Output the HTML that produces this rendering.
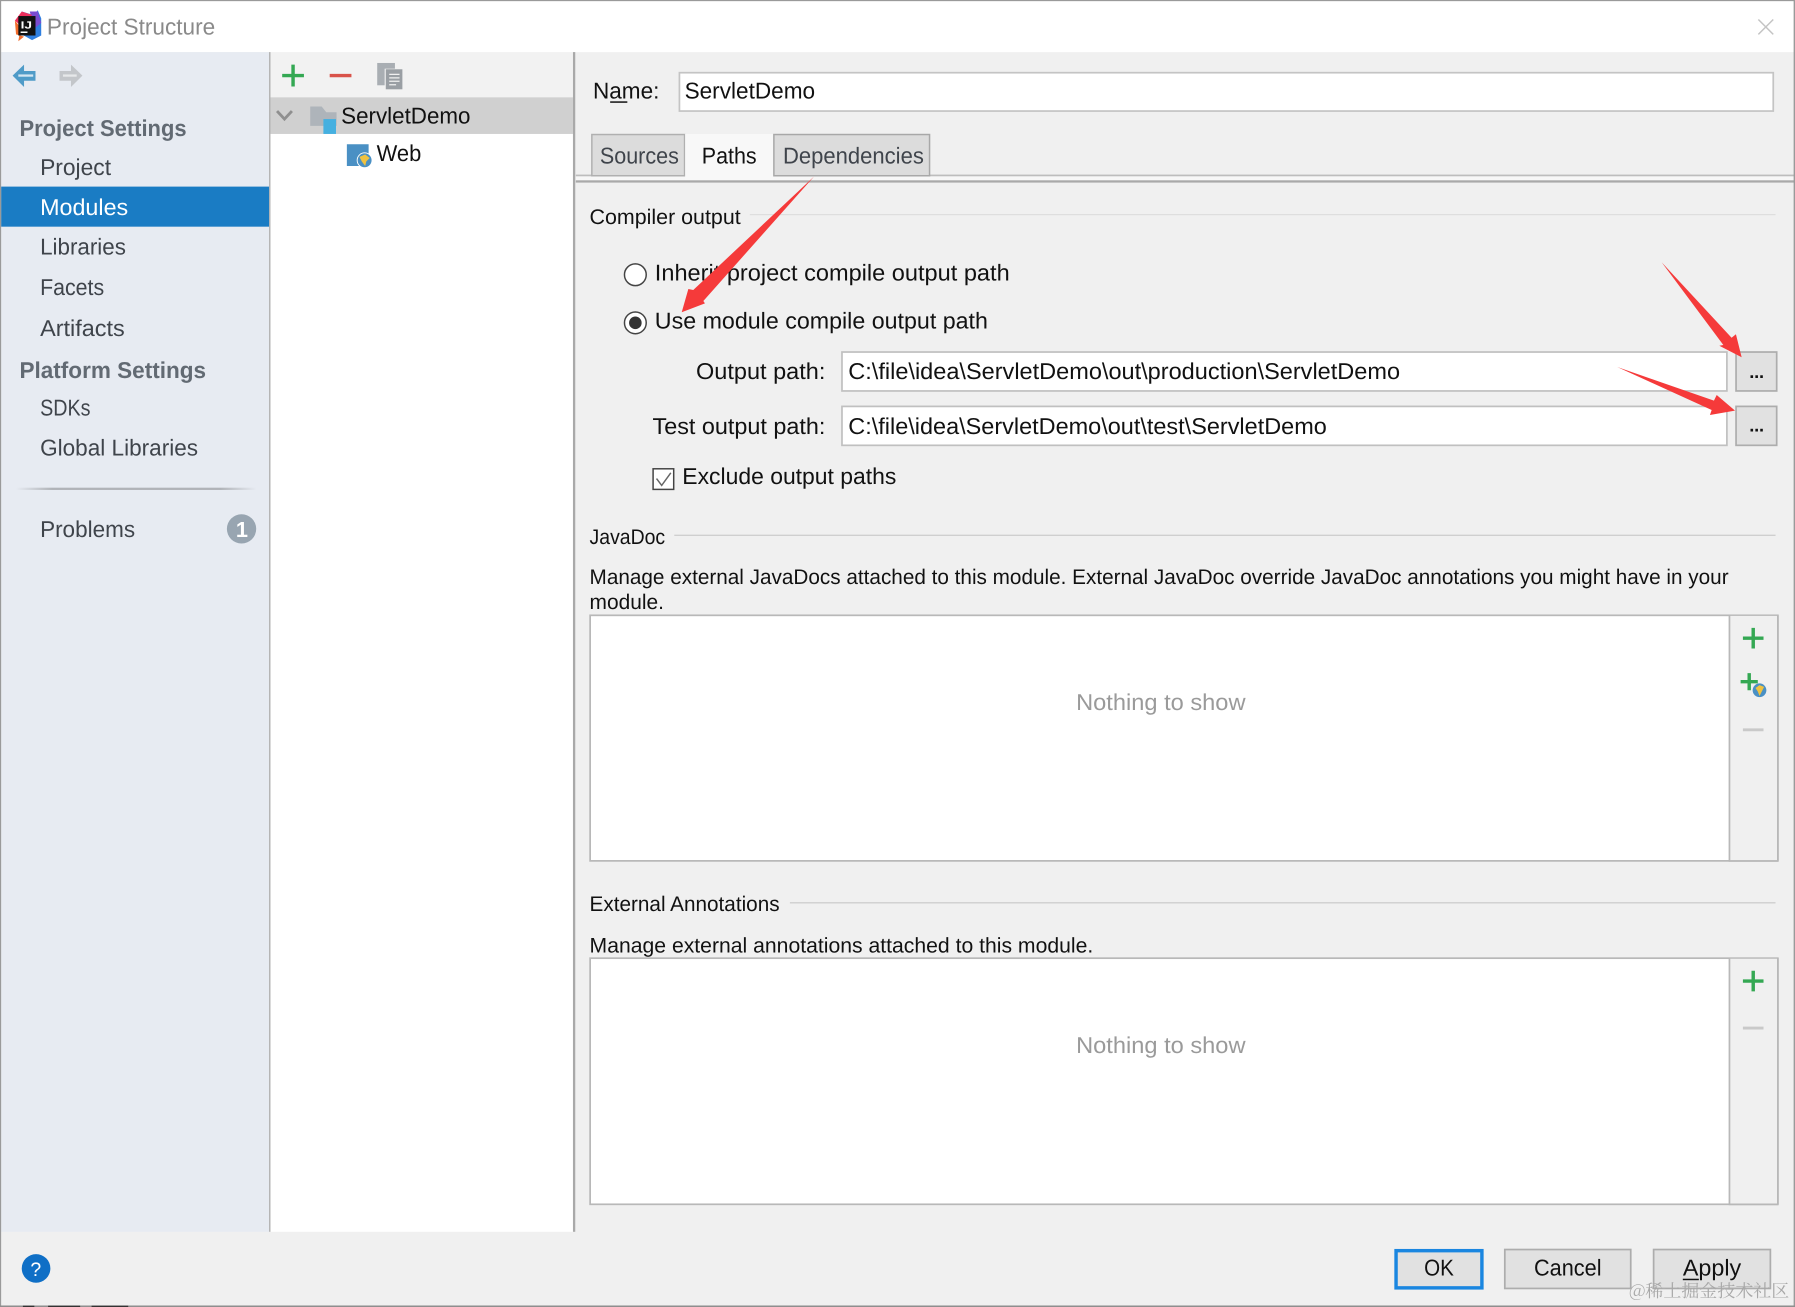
<!DOCTYPE html>
<html><head><meta charset="utf-8"><title>Project Structure</title>
<style>
html,body{margin:0;padding:0;background:#f0f0f0}
svg{display:block;position:absolute;left:0;top:0}
text{font-family:"Liberation Sans","Noto Sans CJK SC",sans-serif;font-size:20px;fill:#111;text-rendering:geometricPrecision}
.s{fill:#3f444b}
.b{font-weight:bold;fill:#626a73}
.m{font-size:18.5px}
.g{fill:#9a9a9a}
</style></head><body>
<svg width="1795" height="1307" viewBox="0 0 1568 1141.7" xmlns="http://www.w3.org/2000/svg">
<rect width="1568" height="1142" fill="#f0f0f0"/>
<!-- title bar -->
<rect width="1568" height="45.5" fill="#fff"/>
<text x="41" y="30" style="fill:#8a8a8a" textLength="147" lengthAdjust="spacingAndGlyphs">Project Structure</text>
<path d="M1536 17L1549 30M1549 17L1536 30" stroke="#c4c4c4" stroke-width="1.3" fill="none"/>
<!-- logo -->
<polygon points="19,10 29,13 33,9 36,16 36,31 28,35 19,30" fill="#2f7fe0"/>
<polygon points="26,10 33,10 36,20 30,25" fill="#7a4bd0"/>
<polygon points="13,18 19,10 28,13 20,24" fill="#ee2f5c"/>
<polygon points="13,18 18,24 16,36 21,32 14,30" fill="#f26b2a"/>
<rect x="16" y="14" width="15" height="17" fill="#111"/>
<text x="18" y="25" style="font-size:9px;font-weight:bold;fill:#fff" textLength="10" lengthAdjust="spacingAndGlyphs">IJ</text>
<rect x="18" y="27.5" width="6" height="1.3" fill="#fff"/>
<!-- sidebar -->
<rect x="1" y="45.5" width="234" height="1030.5" fill="#e7ebf2"/>
<rect x="235" y="45.5" width="1.3" height="1030.5" fill="#b4b4b4"/>
<rect x="1" y="163" width="234" height="35" fill="#1a7cc4"/>
<path d="M11 66L21 56.5V62H31V70.5H21V76Z" fill="#4f9bc8"/>
<path d="M16 66H29" stroke="#d4e6f2" stroke-width="2" fill="none"/>
<path d="M72 66L62 56.5V62H52V70.5H62V76Z" fill="#c3c6ca"/>
<path d="M55 66H67" stroke="#e6e8ea" stroke-width="2" fill="none"/>
<text x="17" y="119" class="b" textLength="146" lengthAdjust="spacingAndGlyphs">Project Settings</text>
<text x="35" y="153" class="s" textLength="62" lengthAdjust="spacingAndGlyphs">Project</text>
<text x="35" y="188" style="fill:#fff" textLength="77" lengthAdjust="spacingAndGlyphs">Modules</text>
<text x="35" y="222.500" class="s" textLength="75" lengthAdjust="spacingAndGlyphs">Libraries</text>
<text x="35" y="257.500" class="s" textLength="56" lengthAdjust="spacingAndGlyphs">Facets</text>
<text x="35" y="293.500" class="s" textLength="74" lengthAdjust="spacingAndGlyphs">Artifacts</text>
<text x="17" y="330" class="b" textLength="163" lengthAdjust="spacingAndGlyphs">Platform Settings</text>
<text x="35" y="363" class="s" textLength="44" lengthAdjust="spacingAndGlyphs">SDKs</text>
<text x="35" y="398" class="s" textLength="138" lengthAdjust="spacingAndGlyphs">Global Libraries</text>
<defs><linearGradient id="sep"><stop offset="0" stop-color="#b0b3b8" stop-opacity="0"/><stop offset=".15" stop-color="#b0b3b8"/><stop offset=".85" stop-color="#b0b3b8"/><stop offset="1" stop-color="#b0b3b8" stop-opacity="0"/></linearGradient></defs>
<rect x="14" y="426" width="210" height="2" fill="url(#sep)"/>
<text x="35" y="469" class="s" textLength="83" lengthAdjust="spacingAndGlyphs">Problems</text>
<circle cx="211" cy="462" r="12.8" fill="#98a5b1"/>
<text x="206" y="469" style="font-weight:bold;font-size:19px;fill:#fff">1</text>
<!-- middle panel -->
<rect x="236.300" y="45.500" width="264.200" height="1030.500" fill="#fff"/>
<rect x="236.300" y="45.500" width="264.200" height="39.500" fill="#f2f2f2"/>
<rect x="236.300" y="85" width="264.200" height="32" fill="#d0d0d0"/>
<rect x="500.500" y="45.500" width="2" height="1030.500" fill="#a9a9a9"/>
<path d="M256 56.500V75.500M246.500 66H265.500" stroke="#34a853" stroke-width="3" fill="none"/>
<path d="M288 66H307" stroke="#d9534a" stroke-width="3" fill="none"/>
<rect x="329.500" y="55" width="15.500" height="19.500" fill="#a9aeb3"/>
<rect x="336" y="60" width="16" height="18.500" fill="#f2f2f2"/>
<rect x="337" y="60.500" width="14.500" height="17.500" fill="#9a9fa4"/>
<path d="M340 65H349M340 68H349M340 71H349M340 74H346" stroke="#f0f0f0" stroke-width="1.100"/>
<path d="M242 97L248.500 104L255 97" stroke="#8f8f8f" stroke-width="2.500" fill="none"/>
<path d="M271 93H281L285 98H294V110H271Z" fill="#aeb4ba"/>
<rect x="282.500" y="104" width="11" height="13" fill="#45b0e0"/>
<text x="298" y="108" textLength="113" lengthAdjust="spacingAndGlyphs">ServletDemo</text>
<rect x="303" y="126" width="19" height="19" fill="#4a90c4"/>
<circle cx="318.500" cy="140" r="6.500" fill="#4a90c4" stroke="#fff" stroke-width="0.800"/>
<path d="M314 137L319 135L323 138L320 141L319 145L316 141Z" fill="#f0c240"/>
<text x="329" y="140.500" textLength="39" lengthAdjust="spacingAndGlyphs">Web</text>
<!-- right: name + tabs -->
<text x="518" y="86" textLength="58" lengthAdjust="spacingAndGlyphs">Name:</text>
<rect x="533" y="88.500" width="15" height="1.300" fill="#111"/>
<rect x="593.500" y="63.500" width="955.500" height="33.500" fill="#fff" stroke="#c4c4c4" stroke-width="1.500"/>
<text x="598" y="86" textLength="114" lengthAdjust="spacingAndGlyphs">ServletDemo</text>
<rect x="503" y="153" width="1065" height="5" fill="#f7f7f7"/>
<rect x="503" y="152.500" width="1065" height="1.500" fill="#bdbdbd"/>
<rect x="503" y="157.500" width="1065" height="2" fill="#a9a9a9"/>
<rect x="517" y="117.500" width="81" height="36" fill="#dcdcdc" stroke="#b0b0b0" stroke-width="1.300"/>
<rect x="598.500" y="117" width="77.500" height="40" fill="#f8f8f8"/>
<rect x="676" y="117.500" width="136" height="36" fill="#dcdcdc" stroke="#a8a8a8" stroke-width="1.300"/>
<text x="524" y="143" class="s" textLength="69" lengthAdjust="spacingAndGlyphs">Sources</text>
<text x="613" y="143" textLength="48" lengthAdjust="spacingAndGlyphs">Paths</text>
<text x="684" y="143" class="s" textLength="123" lengthAdjust="spacingAndGlyphs">Dependencies</text>
<!-- compiler output -->
<text x="515" y="195.500" class="m" textLength="132" lengthAdjust="spacingAndGlyphs">Compiler output</text>
<rect x="655" y="187" width="896" height="1" fill="#dcdcdc"/>
<circle cx="555" cy="240" r="9.500" fill="#fff" stroke="#444" stroke-width="1.300"/>
<text x="572" y="245" textLength="310" lengthAdjust="spacingAndGlyphs">Inherit project compile output path</text>
<circle cx="555" cy="282" r="9.500" fill="#fff" stroke="#444" stroke-width="1.300"/>
<circle cx="555" cy="282" r="5.500" fill="#333"/>
<text x="572" y="287" textLength="291" lengthAdjust="spacingAndGlyphs">Use module compile output path</text>
<text x="608" y="331" textLength="113" lengthAdjust="spacingAndGlyphs">Output path:</text>
<rect x="735.500" y="307.500" width="773" height="34" fill="#fff" stroke="#c0c0c0" stroke-width="1.500"/>
<text x="741" y="331" textLength="482" lengthAdjust="spacingAndGlyphs">C:\file\idea\ServletDemo\out\production\ServletDemo</text>
<rect x="1516.500" y="307.500" width="35.500" height="34" fill="#e1e1e1" stroke="#adadad" stroke-width="1.500"/>
<text x="1528" y="330" style="font-size:16px;font-weight:bold" textLength="13" lengthAdjust="spacing">...</text>
<text x="570" y="379" textLength="151" lengthAdjust="spacingAndGlyphs">Test output path:</text>
<rect x="735.500" y="355" width="773" height="34" fill="#fff" stroke="#c0c0c0" stroke-width="1.500"/>
<text x="741" y="379" textLength="418" lengthAdjust="spacingAndGlyphs">C:\file\idea\ServletDemo\out\test\ServletDemo</text>
<rect x="1516.500" y="355" width="35.500" height="34" fill="#e1e1e1" stroke="#adadad" stroke-width="1.500"/>
<text x="1528" y="377" style="font-size:16px;font-weight:bold" textLength="13" lengthAdjust="spacing">...</text>
<rect x="570.500" y="409.500" width="18" height="18" fill="#fff" stroke="#444" stroke-width="1.300"/>
<path d="M573.500 418L578 424L586 413" stroke="#666" stroke-width="1.300" fill="none"/>
<text x="596" y="423" textLength="187" lengthAdjust="spacingAndGlyphs">Exclude output paths</text>
<!-- javadoc -->
<text x="515" y="475" class="m" textLength="66" lengthAdjust="spacingAndGlyphs">JavaDoc</text>
<rect x="589" y="467" width="962" height="1.200" fill="#cfcfcf"/>
<text x="515" y="510" class="m" textLength="995" lengthAdjust="spacingAndGlyphs">Manage external JavaDocs attached to this module. External JavaDoc override JavaDoc annotations you might have in your</text>
<text x="515" y="532" class="m" textLength="65" lengthAdjust="spacingAndGlyphs">module.</text>
<rect x="515.500" y="537.500" width="1037.500" height="214.500" fill="#fff" stroke="#b8b8b8" stroke-width="1.500"/>
<rect x="1510.500" y="538" width="42" height="214" fill="#f0f0f0"/>
<rect x="1510" y="537.500" width="1.500" height="214.500" fill="#b8b8b8"/>
<rect x="1552.300" y="537.500" width="1.500" height="214.500" fill="#b8b8b8"/>
<rect x="1510" y="751.300" width="43.500" height="1.500" fill="#b8b8b8"/>
<text x="940" y="620" class="g" textLength="148" lengthAdjust="spacingAndGlyphs">Nothing to show</text>
<path d="M1531.500 548.500V566.500M1522.500 557.500H1540.500" stroke="#34a853" stroke-width="3" fill="none"/>
<path d="M1528 588V603M1520.500 595.500H1535.500" stroke="#34a853" stroke-width="3" fill="none"/>
<circle cx="1537" cy="603" r="6" fill="#4a90c4"/>
<path d="M1533.500 601L1537 598.500L1541 600L1539 604L1537 608L1535.500 604Z" fill="#f0c240"/>
<path d="M1522.500 637.500H1540.500" stroke="#c9c9c9" stroke-width="2.500" fill="none"/>
<!-- external annotations -->
<text x="515" y="796" class="m" textLength="166" lengthAdjust="spacingAndGlyphs">External Annotations</text>
<rect x="690" y="788" width="861" height="1.200" fill="#cfcfcf"/>
<text x="515" y="832" class="m" textLength="440" lengthAdjust="spacingAndGlyphs">Manage external annotations attached to this module.</text>
<rect x="515.500" y="837" width="1037.500" height="215" fill="#fff" stroke="#b8b8b8" stroke-width="1.500"/>
<rect x="1510.500" y="837.500" width="42" height="214" fill="#f0f0f0"/>
<rect x="1510" y="837" width="1.500" height="215" fill="#b8b8b8"/>
<rect x="1552.300" y="837" width="1.500" height="215" fill="#b8b8b8"/>
<rect x="1510" y="1051.300" width="43.500" height="1.500" fill="#b8b8b8"/>
<text x="940" y="920" class="g" textLength="148" lengthAdjust="spacingAndGlyphs">Nothing to show</text>
<path d="M1531.500 848V866M1522.500 857H1540.500" stroke="#34a853" stroke-width="3" fill="none"/>
<path d="M1522.500 898H1540.500" stroke="#c9c9c9" stroke-width="2.500" fill="none"/>
<!-- bottom -->
<circle cx="31.500" cy="1108" r="12.500" fill="#0f6fc6"/>
<text x="26.500" y="1114.500" style="font-size:17px;fill:#fff">?</text>
<rect x="1219.500" y="1092.500" width="75" height="32.500" fill="#e1e1e1" stroke="#1a86e0" stroke-width="3"/>
<text x="1244" y="1114" textLength="26" lengthAdjust="spacingAndGlyphs">OK</text>
<rect x="1314.500" y="1091.500" width="110" height="34" fill="#e1e1e1" stroke="#adadad" stroke-width="1.500"/>
<text x="1340" y="1114" textLength="59" lengthAdjust="spacingAndGlyphs">Cancel</text>
<rect x="1444.500" y="1091.500" width="102" height="34" fill="#e1e1e1" stroke="#adadad" stroke-width="1.500"/>
<text x="1470" y="1114" textLength="51" lengthAdjust="spacingAndGlyphs">Apply</text>
<rect x="1470" y="1117" width="14" height="1.300" fill="#111"/>
<text x="1423" y="1133" style="font-family:'Noto Serif CJK SC','Liberation Serif',serif;font-size:15.500px;fill:#a8a8a8" textLength="140" lengthAdjust="spacingAndGlyphs">@稀土掘金技术社区</text>
<!-- window edges -->
<rect width="1568" height="1" fill="#9a9a9a"/>
<rect width="1" height="1141" fill="#9a9a9a"/>
<rect x="1566.800" width="1.200" height="1141" fill="#9a9a9a"/>
<rect y="1140.400" width="1568" height="1.300" fill="#8d8d8d"/>
<path d="M20 1141.700V1140.500H30V1141.700ZM42 1141.700V1140.500H70V1141.700ZM80 1141.700V1140.500H112V1141.700Z" fill="#333"/>
<!-- red arrows -->
<polygon points="711,154.300 614.400,262.900 615.800,265 595.500,272.800 601.300,252.400 605.600,253.300" fill="#f53a3a"/>
<polygon points="1451.500,229.100 1512.600,295 1516.400,292 1521.400,312.100 1501.900,302 1505.400,301.400" fill="#f53a3a"/>
<polygon points="1412.700,320.600 1497.200,350 1499.600,345 1515.600,358.700 1493.700,362.500 1495.200,358.100" fill="#f53a3a"/>
</svg>
</body></html>
